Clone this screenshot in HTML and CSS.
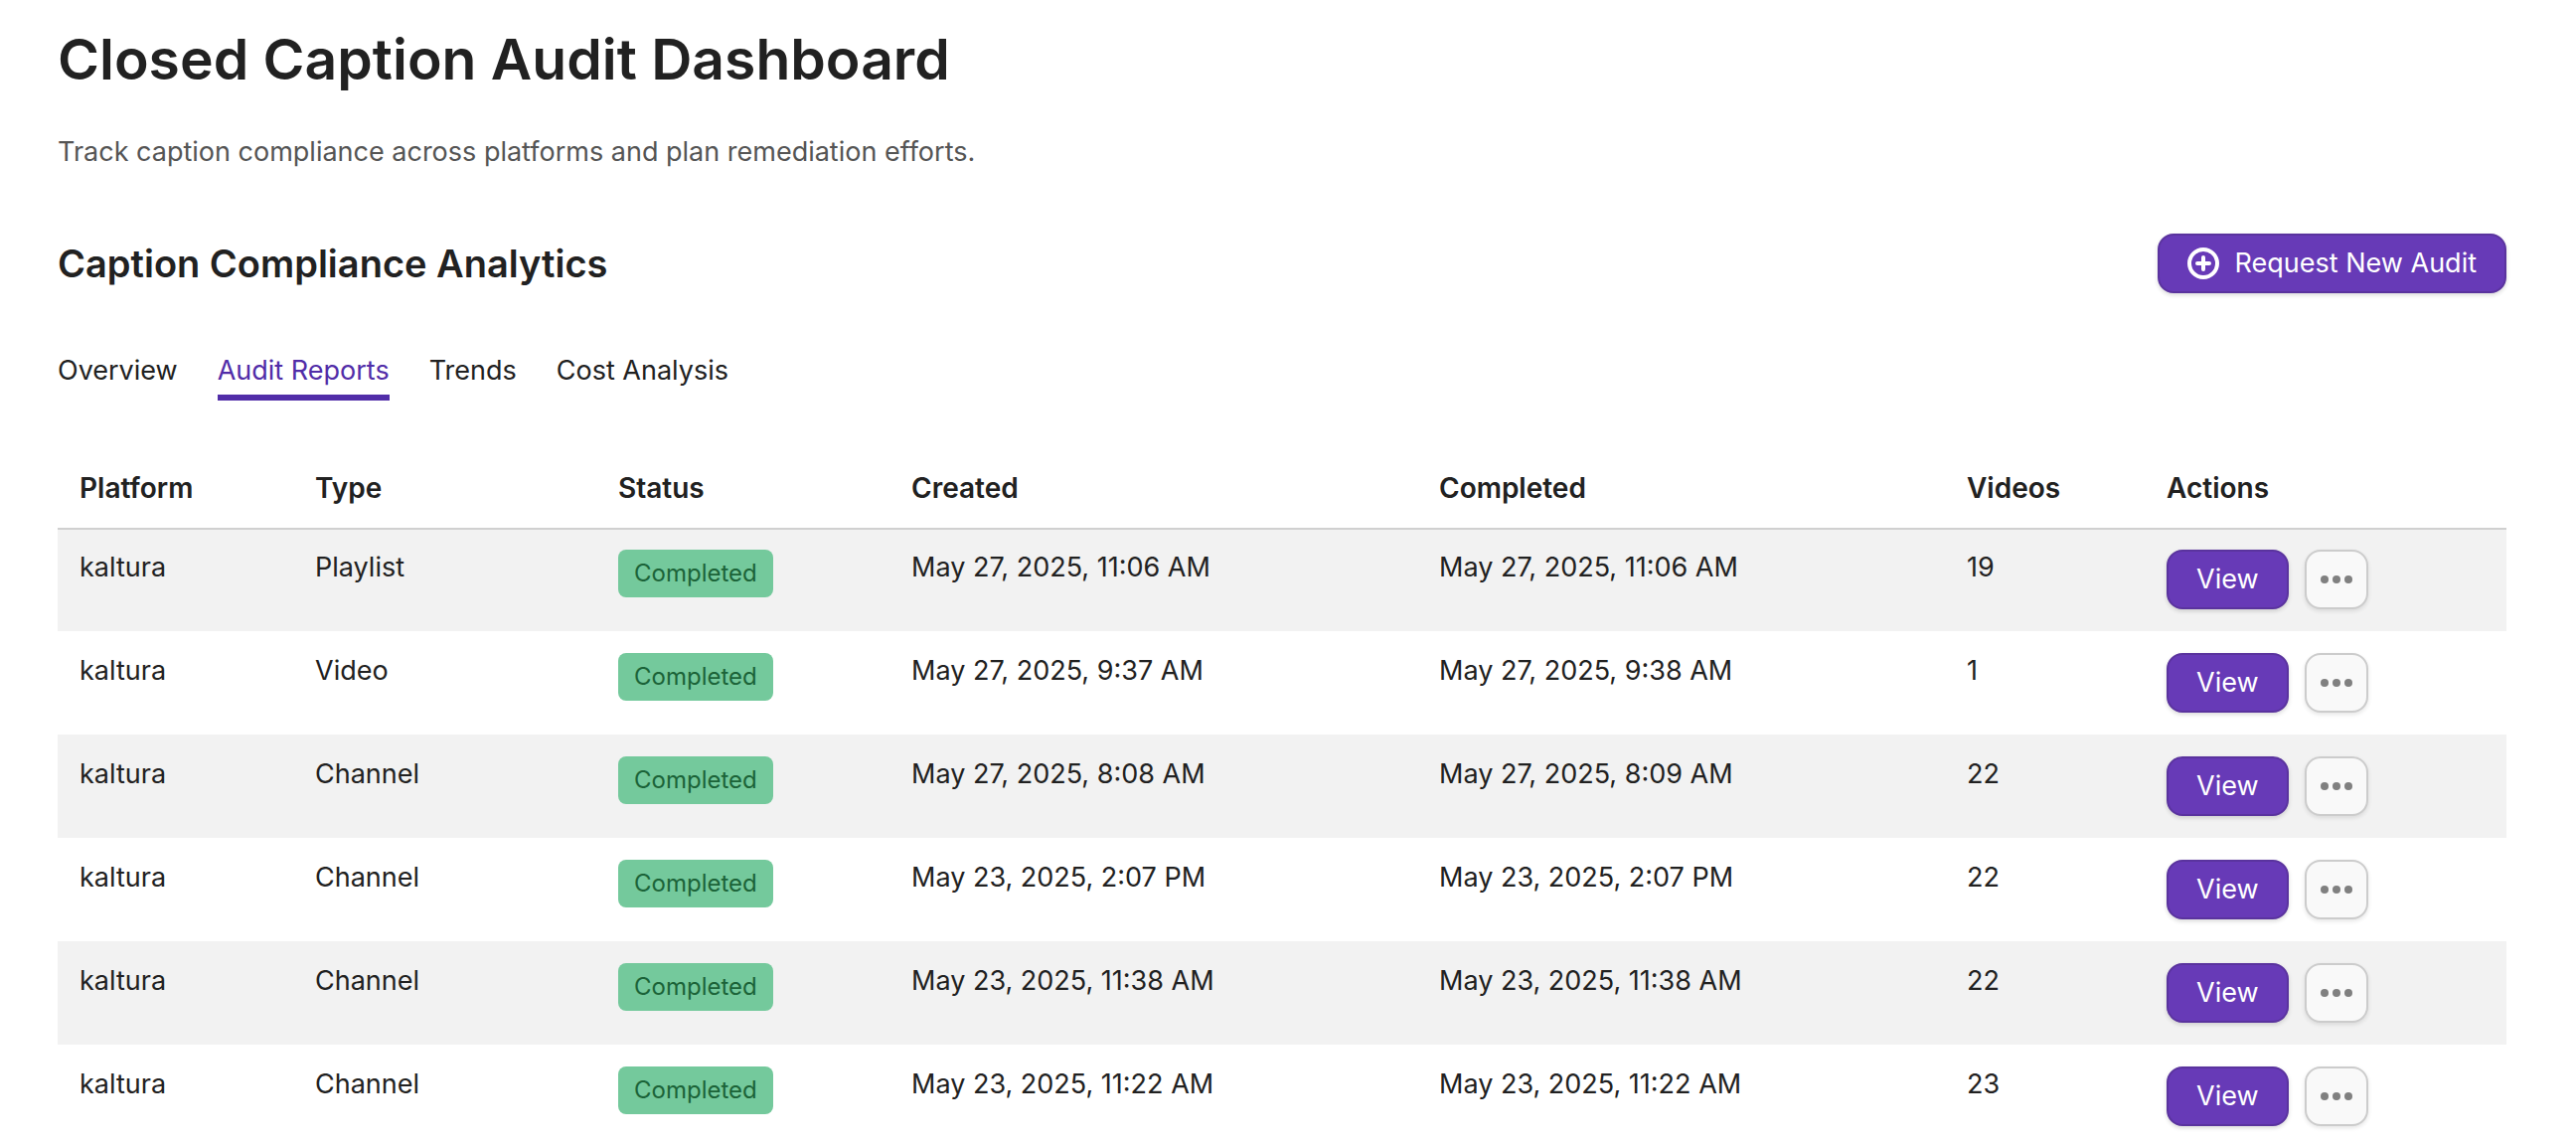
FILE: index.html
```html
<!DOCTYPE html>
<html lang="en">
<head>
    <meta charset="UTF-8">
    <meta name="viewport" content="width=device-width, initial-scale=1.0">
    <title>Closed Caption Audit Dashboard</title>
    <link rel="stylesheet" href="styles.css">
</head>
<body>
    <main class="page">
        <h1>Closed Caption Audit Dashboard</h1>
        <p class="intro">Track caption compliance across platforms and plan remediation efforts.</p>
        <div class="section-header">
            <h2>Caption Compliance Analytics</h2>
            <button type="button" class="btn btn-primary">
                <svg class="icon" viewBox="0 0 32 32" aria-hidden="true"><circle cx="16" cy="16" r="14"/><path d="M16 10v12M10 16h12"/></svg>
                Request New Audit
            </button>
        </div>
        <nav class="tabs">
            <a href="#overview">Overview</a>
            <a href="#reports" class="active">Audit Reports</a>
            <a href="#trends">Trends</a>
            <a href="#cost">Cost Analysis</a>
        </nav>
        <table class="reports">
            <colgroup>
                <col class="col-platform"><col class="col-type"><col class="col-status"><col class="col-date"><col class="col-date"><col class="col-videos"><col>
            </colgroup>
            <thead>
                <tr><th>Platform</th><th>Type</th><th>Status</th><th>Created</th><th>Completed</th><th>Videos</th><th>Actions</th></tr>
            </thead>
            <tbody id="report-rows"></tbody>
        </table>
    </main>
    <script src="script.js"></script>
</body>
</html>
```
FILE: styles.css
```css
* { box-sizing: border-box; }
body { margin: 0; font-family: Inter, "Noto Sans", sans-serif; font-size: 27px; line-height: 36px; color: #212121; background-color: #fff; }
.page { padding: 20px 70px 0 58px; }
h1 { margin: 0; font-size: 57px; line-height: 80px; font-weight: 600; }
.intro { margin: 35px 0 0; color: #555; }
.section-header { display: flex; align-items: center; justify-content: space-between; margin-top: 64px; }
h2 { margin: 0; font-size: 38px; line-height: 60px; font-weight: 600; }
.btn { display: inline-flex; align-items: center; justify-content: center; height: 60px; padding: 0 28px; border-radius: 16px; font: inherit; cursor: pointer; }
.btn-primary { gap: 16px; border: 2px solid #5a339e; background-color: #673ab7; color: #fff; box-shadow: 0 2px 4px rgba(0,0,0,0.15); }
.btn-more { width: 64px; padding: 0; border: 2px solid #ccc; background-color: #f9f9f9; box-shadow: 0 2px 4px rgba(0,0,0,0.1); }
.icon { width: 32px; height: 32px; fill: none; stroke: #fff; stroke-width: 4; stroke-linecap: round; }
.dots { width: 32px; height: 8px; fill: #808080; }
.tabs { display: flex; gap: 40px; margin-top: 60px; }
.tabs a { padding-bottom: 6px; border-bottom: 6px solid transparent; color: #212121; text-decoration: none; }
.tabs a.active { color: #512da8; border-color: #512da8; }
.reports { width: 100%; margin-top: 48px; border-spacing: 0; table-layout: fixed; }
.col-platform { width: 237px; }
.col-type { width: 305px; }
.col-status { width: 295px; }
.col-date { width: 531px; }
.col-videos { width: 201px; }
th { padding: 22px; text-align: left; font-size: 28px; font-weight: 600; }
td { padding: 22px; vertical-align: top; }
tbody tr:nth-child(odd) { background-color: #f2f2f2; }
tbody tr:first-child td { box-shadow: inset 0 2px #d0d0d0; }
.badge { display: inline-block; vertical-align: top; padding: 6px 16px; border-radius: 8px; background-color: #74c99c; color: #1b6338; font-size: 24px; }
.actions { display: flex; gap: 16px; }
```
FILE: script.js
```js
const reports = [
    ['Playlist', 'May 27, 2025, 11:06 AM', 'May 27, 2025, 11:06 AM', 19],
    ['Video', 'May 27, 2025, 9:37 AM', 'May 27, 2025, 9:38 AM', 1],
    ['Channel', 'May 27, 2025, 8:08 AM', 'May 27, 2025, 8:09 AM', 22],
    ['Channel', 'May 23, 2025, 2:07 PM', 'May 23, 2025, 2:07 PM', 22],
    ['Channel', 'May 23, 2025, 11:38 AM', 'May 23, 2025, 11:38 AM', 22],
    ['Channel', 'May 23, 2025, 11:22 AM', 'May 23, 2025, 11:22 AM', 23]
];

document.getElementById('report-rows').innerHTML = reports.map(([type, created, completed, videos]) => `
    <tr>
        <td>kaltura</td>
        <td>${type}</td>
        <td><span class="badge">Completed</span></td>
        <td>${created}</td>
        <td>${completed}</td>
        <td>${videos}</td>
        <td>
            <div class="actions">
                <button type="button" class="btn btn-primary">View</button>
                <button type="button" class="btn btn-more" aria-label="More actions">
                    <svg class="dots" viewBox="0 0 32 8" aria-hidden="true"><circle cx="4" cy="4" r="4"/><circle cx="16" cy="4" r="4"/><circle cx="28" cy="4" r="4"/></svg>
                </button>
            </div>
        </td>
    </tr>`).join('');
```
